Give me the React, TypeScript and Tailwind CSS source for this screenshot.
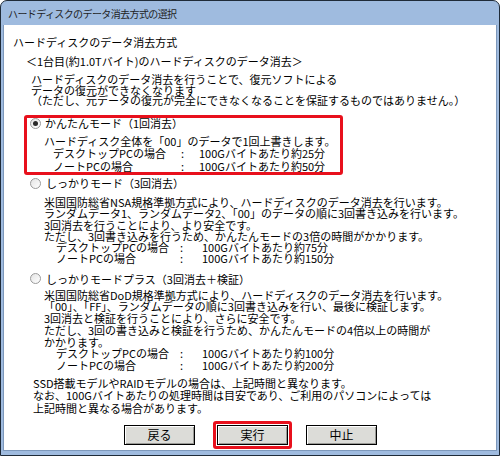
import React from "react";

const font = "[font-family:'Noto_Sans_CJK_JP','Noto_Sans',sans-serif]";

function Radio({ checked }: { checked?: boolean }) {
  return (
    <span className="w-[11px] h-[11px] rounded-full border border-[#9a9a9a] bg-gradient-to-br from-[#e4e4e4] to-white flex items-center justify-center shrink-0">
      {checked && <span className="w-[5px] h-[5px] rounded-full bg-[#2a2a2a]" />}
    </span>
  );
}

function Btn({ label }: { label: string }) {
  return (
    <button className="w-[71px] h-[20px] border border-black bg-[#dcdcd8] shadow-[inset_1px_1px_0_#ffffff,inset_-1px_-1px_0_#9a9a96] text-[12px] leading-[18px] text-black">
      {label}
    </button>
  );
}

export default function App() {
  return (
    <div className={`w-[500px] h-[456px] bg-[#9fbbdf] border border-[#1f2b38] rounded-t-[7px] flex flex-col overflow-hidden text-black ${font}`}>
      {/* title bar */}
      <div className="h-[24px] shrink-0 flex items-center pl-[7px] text-[10px] tracking-[-0.6px] text-[#1e1e1e]">
        ハードディスクのデータ消去方式の選択
      </div>

      {/* client area */}
      <div className="flex-1 mx-[2px] mb-[4px] bg-white border-x border-b border-[#7d98bb] pt-[11px] pl-[9px] text-[11px] whitespace-nowrap">
        <div className="leading-[12px]">ハードディスクのデータ消去方式</div>
        <div className="leading-[12px] mt-[7px] ml-[13px]">＜1台目(約1.0Tバイト)のハードディスクのデータ消去＞</div>
        <div className="leading-[10.5px] mt-[7px] ml-[18px]">
          <div>ハードディスクのデータ消去を行うことで、復元ソフトによる</div>
          <div>データの復元ができなくなります</div>
          <div>（ただし、元データの復元が完全にできなくなることを保証するものではありません。）</div>
        </div>

        {/* かんたんモード */}
        <div className="mt-[9.5px] ml-[11px] w-[319px] h-[60px] border-[3px] border-[#e8101c] rounded-[3px]">
          <div className="h-[10px] mt-0 pl-[3px] flex items-center">
            <Radio checked />
            <span className="ml-[4px] leading-[10px]">かんたんモード（1回消去）</span>
          </div>
          <div className="mt-[7px] ml-[17px] leading-[12.3px]">
            <div>ハードディスク全体を「00」のデータで1回上書きします。</div>
            <div className="flex">
              <span className="ml-[9px] w-[128px]">デスクトップPCの場合</span>
              <span className="w-[18px]">:</span>
              <span>100Gバイトあたり約25分</span>
            </div>
            <div className="flex">
              <span className="ml-[9px] w-[128px]">ノートPCの場合</span>
              <span className="w-[18px]">:</span>
              <span>100Gバイトあたり約50分</span>
            </div>
          </div>
        </div>

        {/* しっかりモード */}
        <div className="mt-[3px] ml-[17px] h-[10px] flex items-center">
          <Radio />
          <span className="ml-[5px] leading-[10px]">しっかりモード（3回消去）</span>
        </div>
        <div className="mt-[9px] ml-[31px] leading-[11.3px]">
          <div>米国国防総省NSA規格準拠方式により、ハードディスクのデータ消去を行います。</div>
          <div>ランダムデータ1、ランダムデータ2、「00」のデータの順に3回書き込みを行います。</div>
          <div>3回消去を行うことにより、より安全です。</div>
          <div>ただし、3回書き込みを行うため、かんたんモードの3倍の時間がかかります。</div>
          <div className="flex">
            <span className="ml-[12px] w-[124px]">デスクトップPCの場合</span>
            <span className="w-[22px]">:</span>
            <span>100Gバイトあたり約75分</span>
          </div>
          <div className="flex">
            <span className="ml-[12px] w-[124px]">ノートPCの場合</span>
            <span className="w-[22px]">:</span>
            <span>100Gバイトあたり約150分</span>
          </div>
        </div>

        {/* しっかりモードプラス */}
        <div className="mt-[9px] ml-[17px] h-[10px] flex items-center">
          <Radio />
          <span className="ml-[5px] leading-[10px]">しっかりモードプラス（3回消去＋検証）</span>
        </div>
        <div className="mt-[6px] ml-[31px] leading-[11.7px]">
          <div>米国国防総省DoD規格準拠方式により、ハードディスクのデータ消去を行います。</div>
          <div>「00」、「FF」、ランダムデータの順に3回書き込みを行い、最後に検証します。</div>
          <div>3回消去と検証を行うことにより、さらに安全です。</div>
          <div>ただし、3回の書き込みと検証を行うため、かんたんモードの4倍以上の時間が</div>
          <div>かかります。</div>
          <div className="flex">
            <span className="ml-[12px] w-[124px]">デスクトップPCの場合</span>
            <span className="w-[22px]">:</span>
            <span>100Gバイトあたり約100分</span>
          </div>
          <div className="flex">
            <span className="ml-[12px] w-[124px]">ノートPCの場合</span>
            <span className="w-[22px]">:</span>
            <span>100Gバイトあたり約200分</span>
          </div>
        </div>

        {/* note */}
        <div className="mt-[5px] ml-[20px] leading-[12.5px]">
          <div>SSD搭載モデルやRAIDモデルの場合は、上記時間と異なります。</div>
          <div>なお、100Gバイトあたりの処理時間は目安であり、ご利用のパソコンによっては</div>
          <div>上記時間と異なる場合があります。</div>
        </div>

        {/* buttons */}
        <div className="mt-[7px] ml-[111px] flex items-center">
          <Btn label="戻る" />
          <div className="ml-[18px] border-[3px] border-[#e8101c] rounded-[3px] p-px">
            <Btn label="実行" />
          </div>
          <div className="ml-[14px]">
            <Btn label="中止" />
          </div>
        </div>
      </div>
    </div>
  );
}
